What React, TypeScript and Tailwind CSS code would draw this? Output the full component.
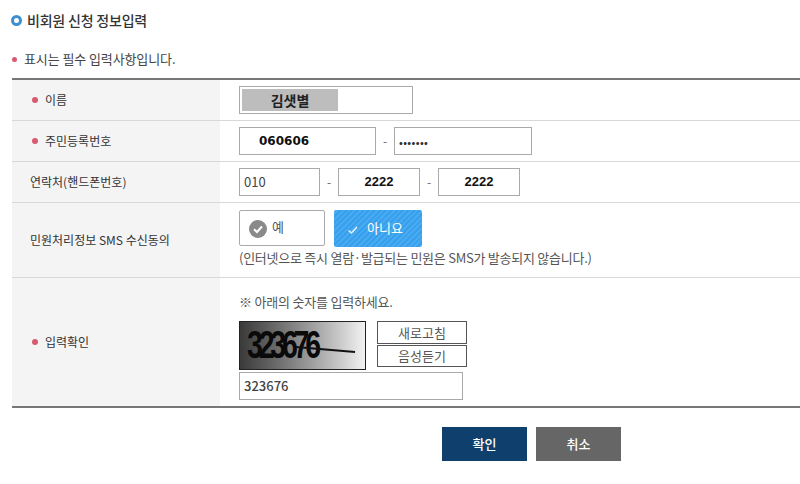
import React from "react";

const font = { fontFamily: '"Noto Sans CJK KR", "Noto Sans", sans-serif' };

function Star() {
  return <span className="mr-[7px] inline-block h-[6px] w-[6px] shrink-0 rounded-full bg-[#d95a70]" />;
}

function Row({
  label,
  star,
  className,
  children,
}: {
  label: string;
  star?: boolean;
  className: string;
  children: React.ReactNode;
}) {
  return (
    <div className={`flex border-b border-[#d8d8d8] ${className}`}>
      <div
        className={`flex w-[208px] shrink-0 items-center bg-[#f4f4f5] text-[12px] text-[#333] ${
          star ? "pl-[20px]" : "pl-[18px]"
        }`}
      >
        {star && <Star />}
        {label}
      </div>
      <div className="min-w-0 flex-1 pl-[19px]">{children}</div>
    </div>
  );
}

function Field({ w, className, children }: { w: string; className?: string; children?: React.ReactNode }) {
  return (
    <div className={`flex h-[28px] items-center border border-[#aaa] bg-white ${w} ${className ?? ""}`}>
      {children}
    </div>
  );
}

function Dash() {
  return <span className="w-[18px] text-center text-[12px] text-[#666]">-</span>;
}

const phoneBold = "justify-center text-[13px] font-bold text-[#111] [font-family:'Liberation_Sans',sans-serif]";

export default function App() {
  return (
    <div className="h-[484px] w-[800px] overflow-hidden bg-white" style={font}>
      <div className="flex h-[40px] items-center pl-[11px] text-[14px] font-medium tracking-[-0.2px] text-[#333]">
        <span className="mr-[5px] h-[11px] w-[11px] rounded-full border-[3px] border-[#3d8fd1]" />
        비회원 신청 정보입력
      </div>
      <div className="flex h-[38px] items-center pl-[12px] text-[13px] tracking-[-0.1px] text-[#444]">
        <span className="mr-[7px] h-[5px] w-[5px] rounded-full bg-[#d95a70]" />
        표시는 필수 입력사항입니다.
      </div>

      <div className="ml-[12px] border-t-2 border-[#777]">
        <Row label="이름" star className="h-[41px]">
          <div className="pt-[6px]">
            <div className="h-[28px] w-[174px] border border-[#aaa] p-[2px]">
              <div className="flex h-[22px] w-[96px] items-center justify-center bg-[#bdbdbd] text-[14px] font-bold text-[#222]">
                김샛별
              </div>
            </div>
          </div>
        </Row>
        <Row label="주민등록번호" star className="h-[41px]">
          <div className="flex items-center pt-[6px]">
            <Field
              w="w-[137px]"
              className="pl-[19px] text-[12px] font-bold text-[#111] [font-family:'DejaVu_Sans',sans-serif]"
            >
              060606
            </Field>
            <Dash />
            <Field w="w-[138px]" className="pl-[4px]">
              <span className="text-[10px] font-bold tracking-[0.4px] text-[#333]">•••••••</span>
            </Field>
          </div>
        </Row>
        <Row label="연락처(핸드폰번호)" className="h-[41px]">
          <div className="flex items-center pt-[6px]">
            <Field w="w-[81px]" className="pl-[4px] text-[13px] text-[#444]">
              010
            </Field>
            <Dash />
            <Field w="w-[82px]" className={phoneBold}>
              2222
            </Field>
            <Dash />
            <Field w="w-[82px]" className={phoneBold}>
              2222
            </Field>
          </div>
        </Row>
        <Row label="민원처리정보 SMS 수신동의" className="h-[75px]">
          <div className="flex gap-[9px] pt-[7px]">
            <div className="flex h-[36px] w-[86px] items-center rounded-[2px] border border-[#aaa] pl-[9px] text-[13px] text-[#555]">
              <svg width="18" height="18" viewBox="0 0 18 18" className="mb-[-2px] mr-[5px]">
                <circle cx="9" cy="9" r="9" fill="#8a8a8a" />
                <path d="M5 9.3 L8 12 L13 6.5" fill="none" stroke="#fff" strokeWidth="2" />
              </svg>
              <span className="mb-[3px]">예</span>
            </div>
            <div className="flex h-[37px] w-[88px] items-center rounded-[2px] bg-[repeating-linear-gradient(135deg,#36a0ee_0px,#36a0ee_2px,#4aaaf0_2px,#4aaaf0_4px)] pl-[13px] text-[13px] text-white">
              <svg width="12" height="10" viewBox="0 0 12 10" className="mr-[8px] mt-[3px]">
                <path d="M1.5 5.5 L4.5 8 L10 2" fill="none" stroke="#e6f4ff" strokeWidth="1.5" />
              </svg>
              <span className="mb-[2px]">아니요</span>
            </div>
          </div>
          <div className="mt-[2px] text-[13px] leading-[18px] tracking-[-0.25px] whitespace-nowrap text-[#555]">
            (인터넷으로 즉시 열람·발급되는 민원은 SMS가 발송되지 않습니다.)
          </div>
        </Row>
        <div className="flex h-[130px] border-b-2 border-[#777]">
          <div className="flex w-[208px] shrink-0 items-center bg-[#f4f4f5] pl-[20px] text-[12px] text-[#333]">
            <Star />
            입력확인
          </div>
          <div className="flex-1 pl-[19px]">
            <div className="pt-[15px] text-[13px] leading-[18px] tracking-[-0.2px] text-[#555]">
              ※ 아래의 숫자를 입력하세요.
            </div>
            <div className="mt-[10px] flex">
              <div className="relative h-[49px] w-[127px] overflow-hidden border border-[#222] bg-gradient-to-r from-[#3a3a3a] to-[#f2f2f2]">
                <span className="absolute left-[7px] top-[0px] origin-left scale-x-[0.75] text-[38px] font-bold leading-[46px] tracking-[-5.6px] text-[#0a0a0a] [font-family:'Liberation_Sans',sans-serif]">
                  323676
                </span>
                <svg className="absolute inset-0" width="126" height="47" viewBox="0 0 126 47">
                  <path d="M56 25 L115 30" stroke="#111" strokeWidth="2" />
                </svg>
              </div>
              <div className="ml-[11px] flex w-[90px] flex-col gap-[1px] text-[13px] text-[#555]">
                <div className="flex h-[23px] items-center justify-center border border-[#555]">새로고침</div>
                <div className="flex h-[22px] items-center justify-center border border-[#555]">음성듣기</div>
              </div>
            </div>
            <div className="mt-[2px] flex h-[28px] w-[224px] items-center border border-[#aaa] pl-[4px] text-[13px] font-medium text-[#444]">
              323676
            </div>
          </div>
        </div>
      </div>

      <div className="flex pl-[442px] pt-[19px] text-[13px] font-medium text-white">
        <div className="flex h-[34px] w-[85px] items-center justify-center bg-[#0f3f6d]">확인</div>
        <div className="ml-[9px] flex h-[34px] w-[85px] items-center justify-center bg-[#666]">취소</div>
      </div>
    </div>
  );
}
